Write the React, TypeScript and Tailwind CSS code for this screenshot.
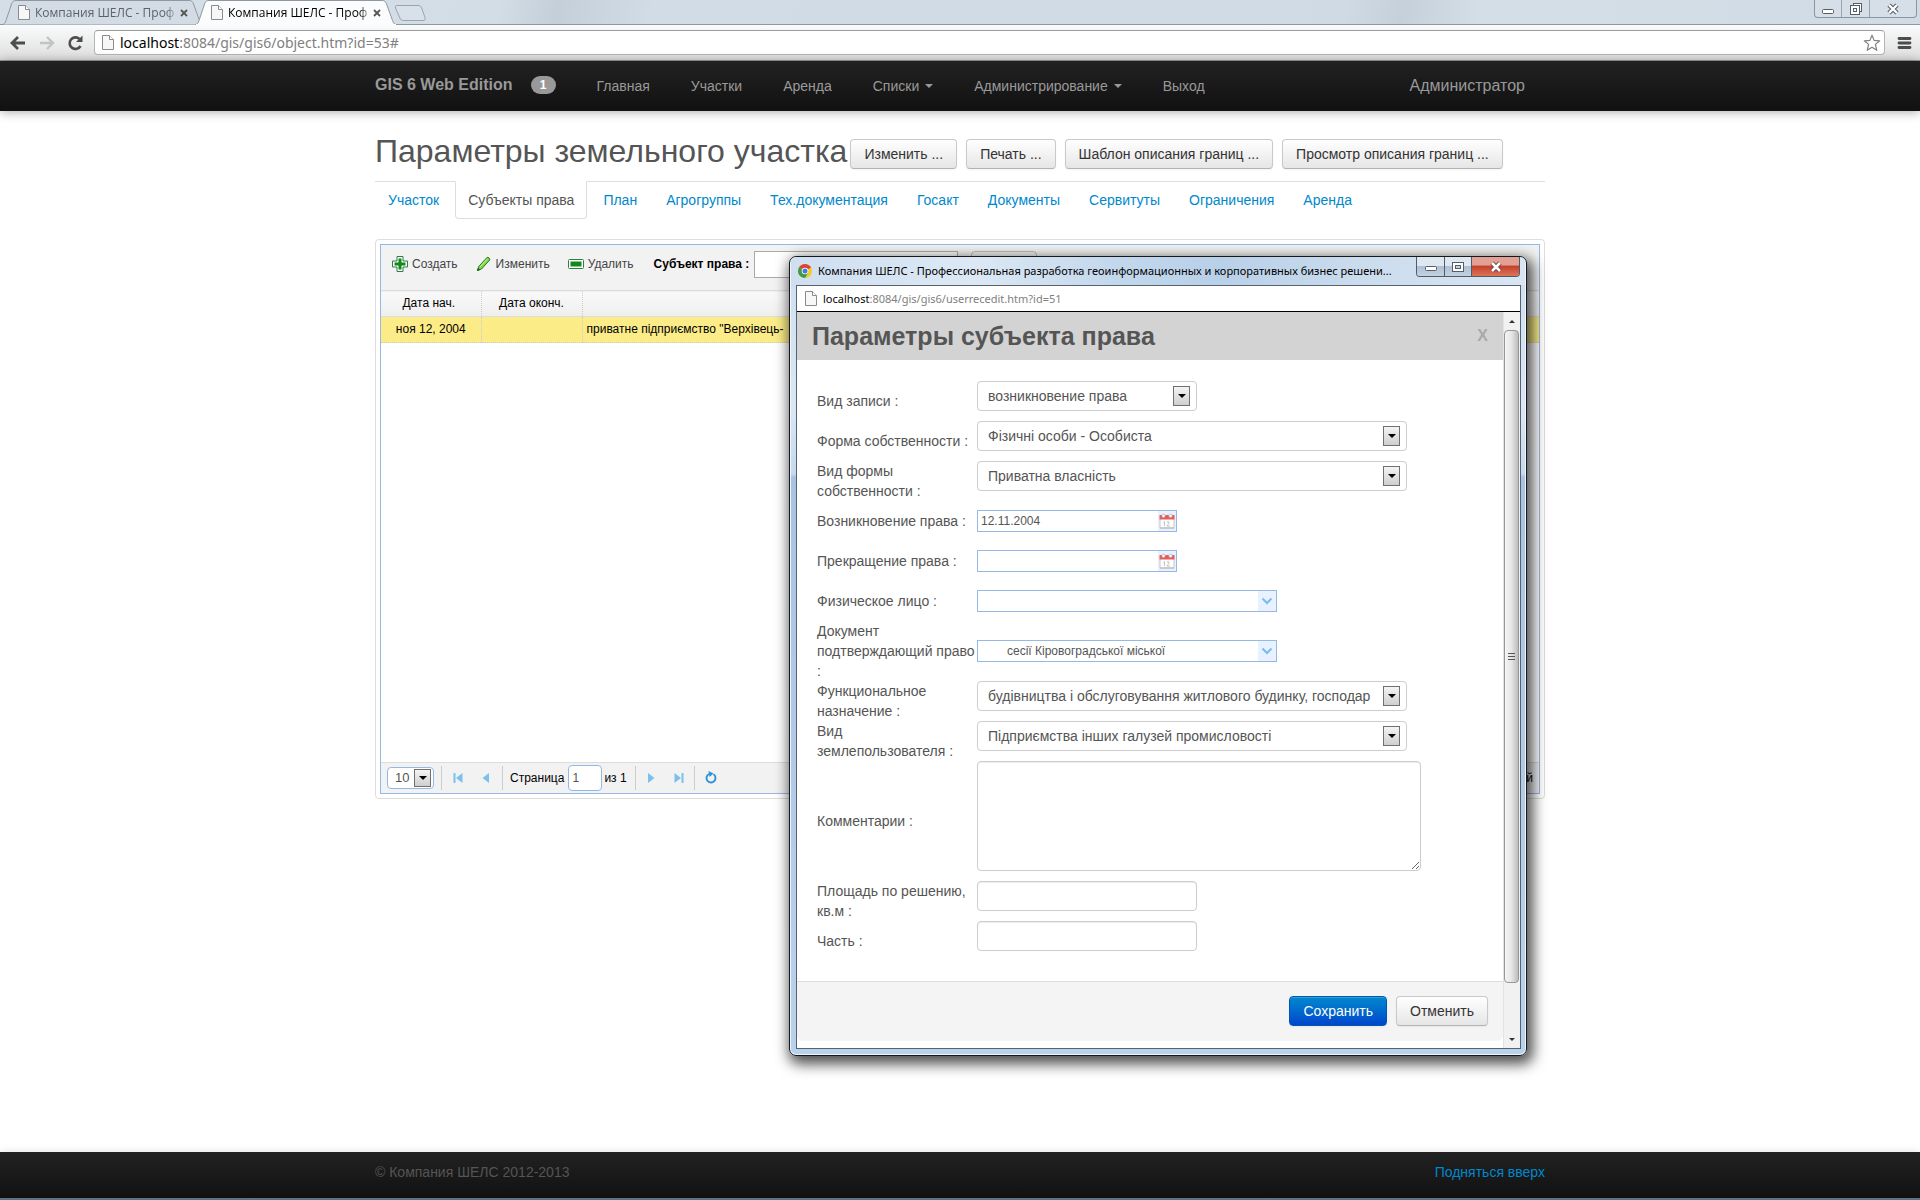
import { useState } from 'react'
import type { ReactNode } from 'react'

const NAV = [
  { label: 'Главная' },
  { label: 'Участки' },
  { label: 'Аренда' },
  { label: 'Списки', caret: true },
  { label: 'Администрирование', caret: true },
  { label: 'Выход' },
]

const ACTIONS = ['Изменить ...', 'Печать ...', 'Шаблон описания границ ...', 'Просмотр описания границ ...']

const TABS = [
  'Участок', 'Субъекты права', 'План', 'Агрогруппы', 'Тех.документация',
  'Госакт', 'Документы', 'Сервитуты', 'Ограничения', 'Аренда',
]

type Field = {
  id: string
  label: string
  kind: 'select' | 'date' | 'combo' | 'textarea' | 'text'
  value?: string
  short?: boolean
}

const FIELDS: Field[] = [
  { id: 'record', label: 'Вид записи :', kind: 'select', value: 'возникновение права', short: true },
  { id: 'ownform', label: 'Форма собственности :', kind: 'select', value: 'Фізичні особи - Особиста' },
  { id: 'ownkind', label: 'Вид формы\nсобственности :', kind: 'select', value: 'Приватна власність' },
  { id: 'start', label: 'Возникновение права :', kind: 'date', value: '12.11.2004' },
  { id: 'end', label: 'Прекращение права :', kind: 'date', value: '' },
  { id: 'person', label: 'Физическое лицо :', kind: 'combo', value: '' },
  { id: 'doc', label: 'Документ\nподтверждающий право\n:', kind: 'combo', value: 'сесії Кіровоградської міської' },
  { id: 'func', label: 'Функциональное\nназначение :', kind: 'select', value: 'будівництва і обслуговування житлового будинку, господар' },
  { id: 'landuser', label: 'Вид\nземлепользователя :', kind: 'select', value: 'Підприємства інших галузей промисловості' },
  { id: 'comment', label: 'Комментарии :', kind: 'textarea' },
  { id: 'area', label: 'Площадь по решению,\nкв.м :', kind: 'text' },
  { id: 'part', label: 'Часть :', kind: 'text' },
]

/* ── Icons ── */

function PageIcon() {
  return (
    <svg width="12" height="15" viewBox="0 0 12 15" className="shrink-0">
      <path d="M.5.5h7l4 4v10H.5z" fill="#f7f7f7" stroke="#8b8b8b" />
      <path d="M7.500.5v4h4" fill="#fff" stroke="#8b8b8b" />
    </svg>
  )
}

function ChromeIcon() {
  return (
    <svg width="14" height="14" viewBox="0 0 14 14" className="shrink-0">
      <circle cx="7" cy="7" r="7" fill="#f6c928" />
      <path d="M7 7 .95 3.500A7 7 0 0 1 13.060 3.500z" fill="#dc4437" />
      <path d="M7 7 .95 3.500A7 7 0 0 0 7 14l3-5z" fill="#3a9c4b" />
      <circle cx="7" cy="7" r="3.300" fill="#fff" />
      <circle cx="7" cy="7" r="2.500" fill="#3f7de0" />
    </svg>
  )
}

function CloseX() {
  return (
    <svg width="8" height="8" viewBox="0 0 8 8">
      <path d="m1 1 6 6M7 1 1 7" stroke="#555" strokeWidth="1.800" />
    </svg>
  )
}

function AddIcon() {
  return (
    <svg width="16" height="16" viewBox="0 0 16 16">
      <path d="M5 .5h6V5h4.500v6H11v4.500H5V11H.5V5H5z" fill="#fff" stroke="#2f7d45" strokeLinejoin="round" />
      <path d="M6.500 2.500h3v4h4v3h-4v4h-3v-4h-4v-3h4z" fill="#118a1b" />
    </svg>
  )
}

function PencilIcon() {
  return (
    <svg width="16" height="16" viewBox="0 0 16 16">
      <path d="m1.500 14.500 1.200-4L11 1.500c1-.9 3.500 1.200 2.700 2.500L5.500 13z" fill="#7ed63f" stroke="#2d7a2d" strokeLinejoin="round" />
      <path d="m1 15 1-3.200L4 14z" fill="#1f4f1f" />
      <path d="m4 11 7.500-8" stroke="#c9f5a4" />
    </svg>
  )
}

function RemoveIcon() {
  return (
    <svg width="16" height="16" viewBox="0 0 16 16">
      <rect x=".5" y="3.500" width="15" height="9" rx="1" fill="#fff" stroke="#2f7d45" />
      <path d="M2.500 5.500h11v5h-11z" fill="#118a1b" />
    </svg>
  )
}

function CalendarIcon() {
  return (
    <svg width="16" height="16" viewBox="0 0 16 16">
      <path d="M1 5h14v10H1z" fill="#fdfdfd" stroke="#c9c9c9" />
      <path d="M.5 2h15v4.500H.5z" fill="#ea5a5a" />
      <path d="M1 15h14" stroke="#b5b5b5" />
      <circle cx="4.500" cy="2.800" r="1.700" fill="#fff" stroke="#b9aeb0" strokeWidth=".8" />
      <circle cx="11.500" cy="2.800" r="1.700" fill="#fff" stroke="#b9aeb0" strokeWidth=".8" />
      <path d="m4.500 9.500 1-1v4.500M8 9q2.500-1.200 2 1L8 13h3" fill="none" stroke="#bdbdbd" strokeWidth=".9" />
    </svg>
  )
}

function PagerIcon({ d }: { d: string }) {
  return (
    <svg width="16" height="16" viewBox="0 0 16 16">
      <path d={d} fill="#7cc0ee" />
    </svg>
  )
}

function Caret() {
  return <span className="ml-1.5 border-x-4 border-t-4 border-x-transparent border-t-[#999]" />
}

/* Windows style drop-down arrow shown over native selects */
function SelectArrow({ small }: { small?: boolean }) {
  return (
    <span
      className={`pointer-events-none absolute flex items-center justify-center border border-[#707070]
                  bg-linear-to-b from-[#f4f4f4] to-[#cfcfcf] ${
                    small ? 'right-[3px] top-[2px] h-[18px] w-[17px]' : 'right-[7px] top-[5px] h-[20px] w-[17px]'
                  }`}
    >
      <span className="border-x-4 border-t-4 border-x-transparent border-t-black" />
    </span>
  )
}

/* ── Browser ── */

function BrowserTab({ active }: { active?: boolean }) {
  return (
    <div className={`relative flex h-[25px] w-[202px] items-center pl-4 pr-4 ${active ? '-ml-[9px]' : ''}`}>
      <svg width="202" height="25" viewBox="0 0 202 25" className="absolute left-0 top-0">
        <path
          d="M0 24.500c2 0 3-1 4-4L9.500 4C10.500 1.500 11.500.5 14 .5h173c2.500 0 3.500 1 4.500 3.500l6 16.500c1 3 2 4 4 4"
          fill={active ? '#fbfcfd' : '#d3dce5'}
          stroke="#8f979f"
        />
        {active && <path d="M1 24.500h200" stroke="#fbfcfd" />}
      </svg>
      <div className="relative flex flex-1 items-center">
        <PageIcon />
        <span
          className={`ml-[5px] w-[145px] whitespace-nowrap text-[12px] leading-4
                      [mask-image:linear-gradient(to_right,black_90%,transparent)] ${
                        active ? 'text-black' : 'text-[#5c6168]'
                      }`}
        >
          Компания ШЕЛС - Проф
        </span>
        <button aria-label="Закрыть вкладку"><CloseX /></button>
      </div>
    </div>
  )
}

function BrowserBar() {
  return (
    <div className="font-['Open_Sans','Noto_Sans',sans-serif]">
      <div className="flex h-[25px] border-b border-[#8f979f] bg-[linear-gradient(100deg,#d5dee7_0%,#d3dde6_26%,#c5cfd9_29%,#d2dce6_34%,#cfdae4_70%,#c6d0da_73%,#d4dee7_77%,#d0dbe5_100%)]">
        <div className="flex pl-0.5">
          <BrowserTab />
          <BrowserTab active />
        </div>
        <svg width="34" height="25" viewBox="0 0 34 25" className="-ml-[3px]">
          <path d="M3 5.500h21c2 0 3 .8 3.600 2.500l3.400 9.500c.6 2-.2 3-2 3H9.500c-2 0-3-.8-3.600-2.500L1.500 8C1 6.500 1.500 5.500 3 5.500z" fill="#d8e1e9" stroke="#9ba4ad" />
        </svg>
        <div className="ml-auto mr-[3px] flex h-[18px] rounded-b border border-t-0 border-[#8b95a1] bg-[#d6dfe8]">
          <button aria-label="Свернуть" className="flex w-[27px] items-center justify-center border-r border-[#9aa4af]">
            <svg width="14" height="14" viewBox="0 0 14 14"><rect x="1.500" y="7.500" width="11" height="4" rx="1" fill="#fff" stroke="#555d68" /></svg>
          </button>
          <button aria-label="Развернуть" className="flex w-[28px] items-center justify-center border-r border-[#9aa4af]">
            <svg width="14" height="14" viewBox="0 0 14 14">
              <rect x="4.500" y="1.500" width="8" height="8" fill="#fff" stroke="#555d68" />
              <rect x="1.500" y="3.500" width="9" height="9" fill="#fff" stroke="#555d68" />
              <rect x="4.500" y="6.500" width="3" height="3" fill="#fff" stroke="#555d68" />
            </svg>
          </button>
          <button aria-label="Закрыть" className="flex w-[46px] items-center justify-center">
            <svg width="14" height="12" viewBox="0 0 14 12">
              <path d="m3 2 8 8M11 2l-8 8" stroke="#555d68" strokeWidth="4.500" />
              <path d="m3 2 8 8M11 2l-8 8" stroke="#fff" strokeWidth="2.400" />
            </svg>
          </button>
        </div>
      </div>

      <div className="flex h-9 items-center border-b border-[#9a9a9a] bg-linear-to-b from-[#fafbfc] to-[#dedede] pl-[9px] pr-2">
        <button aria-label="Назад">
          <svg width="18" height="16" viewBox="0 0 18 16"><path d="M16 8H3M9 2 3 8l6 6" fill="none" stroke="#4d4d4d" strokeWidth="2.800" /></svg>
        </button>
        <button aria-label="Вперёд" className="ml-[11px]">
          <svg width="18" height="16" viewBox="0 0 18 16"><path d="M2 8h13M9 2l6 6-6 6" fill="none" stroke="#c3c3c3" strokeWidth="2.400" /></svg>
        </button>
        <button aria-label="Обновить" className="ml-[11px]">
          <svg width="18" height="16" viewBox="0 0 18 16">
            <path d="M13.500 11A5.800 5.800 0 1 1 12.500 4" fill="none" stroke="#4d4d4d" strokeWidth="2.600" />
            <path d="M15.500.5v6.500H9z" fill="#4d4d4d" />
          </svg>
        </button>
        <div className="ml-[9px] flex h-[25px] flex-1 items-center rounded-sm border border-[#b4b4b4] border-t-[#9c9c9c] bg-white pl-[7px] pr-[3px]">
          <PageIcon />
          <span className="ml-[6px] flex-1 font-['Noto_Sans',sans-serif] text-[14px] leading-5 text-[#808080]">
            <span className="text-black">localhost</span>:8084/gis/gis6/object.htm?id=53#
          </span>
          <svg width="18" height="18" viewBox="0 0 18 18">
            <path d="m9 1.200 2.100 5.200 5.600.4-4.300 3.600 1.400 5.900L9 13.300l-4.800 3 1.400-5.900L1.300 6.800l5.600-.4z" fill="#fff" stroke="#808080" strokeWidth="1.200" strokeLinejoin="round" />
          </svg>
        </div>
        <button aria-label="Меню" className="ml-3">
          <svg width="15" height="14" viewBox="0 0 15 14"><path d="M2 2.500h11M2 7h11M2 11.500h11" stroke="#4d4d4d" strokeWidth="2.800" strokeLinecap="round" /></svg>
        </button>
      </div>
    </div>
  )
}

/* ── Main page ── */

function Btn({ children, primary }: { children: ReactNode; primary?: boolean }) {
  return (
    <button
      className={`h-[30px] rounded border px-[13px] text-[14px] leading-5 shadow-[inset_0_1px_0_rgba(255,255,255,0.2),0_1px_2px_rgba(0,0,0,0.05)] ${
        primary
          ? 'border-[#0055b5] bg-linear-to-b from-[#0088cc] to-[#0044cc] text-white'
          : 'border-[#c9c9c9] border-b-[#b3b3b3] bg-linear-to-b from-white to-[#e6e6e6] text-[#333]'
      }`}
    >
      {children}
    </button>
  )
}

function Navbar() {
  return (
    <nav className="h-[50px] bg-linear-to-b from-[#222] to-[#111] text-[#999] shadow-[0_1px_10px_rgba(0,0,0,0.35)]">
      <div className="mx-auto flex h-full max-w-[1170px] items-center">
        <div className="flex items-center gap-[18px] pb-[2px]">
          <a href="#" className="text-[16px] font-bold leading-5">GIS 6 Web Edition</a>
          <span className="flex h-[18px] w-[25px] items-center justify-center rounded-full bg-[#999] text-[12px] font-bold text-white">1</span>
        </div>
        <ul className="ml-[21px] flex gap-px text-[14px] leading-5">
          {NAV.map(item => (
            <li key={item.label}>
              <a href="#" className="flex items-center px-5">
                {item.label}
                {item.caret && <Caret />}
              </a>
            </li>
          ))}
        </ul>
        <span className="ml-auto mr-5 text-[16px] leading-5">Администратор</span>
      </div>
    </nav>
  )
}

function ToolButton({ icon, children }: { icon: ReactNode; children: ReactNode }) {
  return (
    <button className="flex items-center gap-1 text-[12px] leading-4 text-[#444]">
      {icon}
      {children}
    </button>
  )
}

function Pager() {
  const sep = 'h-6 border-l border-[#ccc]'
  return (
    <div className="flex h-[31px] items-center border-t border-[#ddd] bg-[#f2f2f2] pl-[6px] pr-[6px] text-[12px] leading-4 text-black">
      <div className="relative h-[22px] w-[47px]">
        <select aria-label="Записей на странице" className="h-[22px] w-full appearance-none rounded border border-[#95b8e7] bg-white pl-[7px] text-[13px] text-[#555]">
          <option>10</option>
        </select>
        <SelectArrow small />
      </div>
      <span className={`ml-[7px] ${sep}`} />
      <button aria-label="Первая" className="ml-2"><PagerIcon d="M3.500 3h2v10h-2zM12.500 3v10L6 8z" /></button>
      <button aria-label="Предыдущая" className="ml-3"><PagerIcon d="M11 3v10L4.500 8z" /></button>
      <span className={`ml-2 ${sep}`} />
      <label htmlFor="page" className="ml-[7px]">Страница</label>
      <input id="page" defaultValue="1" className="ml-1 h-[26px] w-[34px] rounded border border-[#95b8e7] bg-white px-[3px] text-[12px] text-[#555]" />
      <span className="ml-0.5">из 1</span>
      <span className={`ml-2 ${sep}`} />
      <button aria-label="Следующая" className="ml-[7px]"><PagerIcon d="M5 3v10l6.500-5z" /></button>
      <button aria-label="Последняя" className="ml-3"><PagerIcon d="M3.500 3v10L10 8zM10.500 3h2v10h-2z" /></button>
      <span className={`ml-[7px] ${sep}`} />
      <button aria-label="Обновить таблицу" className="ml-2">
        <svg width="16" height="16" viewBox="0 0 16 16">
          <path d="M10.500 4.300A4.500 4.500 0 1 1 6 4" fill="none" stroke="#2e90d6" strokeWidth="1.900" />
          <path d="m5.500 1 5 2.500-4 3.500z" fill="#2e90d6" />
        </svg>
      </button>
      <span className="ml-auto">Просмотр 1 до 1 из 1 записей</span>
    </div>
  )
}

function Grid() {
  return (
    <div className="mt-5 rounded border border-[#ddd] p-1">
      <div className="border border-[#95b8e7]">
        <div className="flex h-[45px] items-start bg-[#f2f2f2] pl-[11px] pt-[6px]">
          <div className="flex h-[26px] items-center gap-[18px]">
            <ToolButton icon={<AddIcon />}>Создать</ToolButton>
            <ToolButton icon={<PencilIcon />}>Изменить</ToolButton>
            <ToolButton icon={<RemoveIcon />}>Удалить</ToolButton>
          </div>
          <label htmlFor="subject" className="ml-5 text-[12px] font-bold leading-[26px] text-black">Субъект права :</label>
          <input id="subject" className="ml-[5px] h-[27px] w-[204px] border border-[#aaa] bg-white px-1 text-[12px]" />
          <button aria-label="Поиск" className="ml-[13px] h-[27px] w-[66px] rounded border border-[#bbb] bg-[#f2f2f2]" />
        </div>
        <table className="w-full table-fixed border-collapse text-[12px] leading-4 text-black">
          <colgroup>
            <col className="w-[100px]" />
            <col className="w-[101px]" />
            <col />
          </colgroup>
          <thead>
            <tr className="h-[26px] border-y border-[#ddd] bg-linear-to-b from-[#f9f9f9] to-[#efefef]">
              <th className="border-r border-dotted border-r-[#ccc] pb-0.5 pr-1 font-normal">Дата нач.</th>
              <th className="border-r border-dotted border-r-[#ccc] pb-0.5 font-normal">Дата оконч.</th>
              <th aria-label="Субъект права" />
            </tr>
          </thead>
          <tbody>
            <tr className="h-[26px] border-b border-dotted border-[#ccc] bg-[#fbec88]">
              <td className="border-r border-dotted border-r-[#ccc] pb-0.5 text-center">ноя 12, 2004</td>
              <td className="border-r border-dotted border-r-[#ccc]" />
              <td className="pb-0.5 pl-1">приватне підприємство "Верхівець-</td>
            </tr>
          </tbody>
        </table>
        <div className="h-[419px] bg-white" />
        <Pager />
      </div>
    </div>
  )
}

/* ── Popup window ── */

function FieldControl({ field }: { field: Field }) {
  const [value, setValue] = useState(field.value ?? '')

  if (field.kind === 'select') {
    return (
      <div className={`relative mb-[10px] h-[30px] ${field.short ? 'w-[220px]' : 'w-[430px]'}`}>
        <select
          id={field.id}
          className="h-[30px] w-full appearance-none overflow-hidden rounded border border-[#ccc] bg-white pl-[10px] pr-[26px] text-[14px] leading-5 text-[#555]"
        >
          <option>{value}</option>
        </select>
        <SelectArrow />
      </div>
    )
  }
  if (field.kind === 'textarea') {
    return (
      <textarea
        id={field.id}
        className="mb-[10px] block h-[110px] w-[444px] rounded border border-[#ccc] bg-white px-[6px] py-1 text-[14px] shadow-[inset_0_1px_1px_rgba(0,0,0,0.075)]"
      />
    )
  }
  if (field.kind === 'text') {
    return (
      <input
        id={field.id}
        value={value}
        onChange={e => setValue(e.target.value)}
        className="mb-[10px] block h-[30px] w-[220px] rounded border border-[#ccc] bg-white px-[6px] text-[14px] shadow-[inset_0_1px_1px_rgba(0,0,0,0.075)]"
      />
    )
  }
  const date = field.kind === 'date'
  return (
    <div className={`flex h-[22px] border border-[#95b8e7] bg-white ${date ? 'w-[200px]' : 'w-[300px]'}`}>
      <input
        id={field.id}
        value={value}
        onChange={e => setValue(e.target.value)}
        className={`min-w-0 flex-1 text-[12px] leading-5 text-[#555] outline-none ${date ? 'pl-[3px]' : 'pl-[29px]'}`}
      />
      <button aria-label="Выбрать" className="flex w-[18px] items-center justify-center bg-[#e8f1ff]">
        {date ? (
          <CalendarIcon />
        ) : (
          <svg width="12" height="8" viewBox="0 0 12 8"><path d="m1.500 1.500 4.500 4.500 4.500-4.500" fill="none" stroke="#76bdee" strokeWidth="2" /></svg>
        )}
      </button>
    </div>
  )
}

function Scrollbar() {
  return (
    <div className="flex w-[17px] flex-col items-center border-l border-[#e3e3e3] bg-[#f1f1f1] pr-px">
      <div className="flex h-[18px] items-center"><span className="border-x-[3px] border-b-[3px] border-x-transparent border-b-[#333]" /></div>
      <div className="flex h-[653px] w-[15px] flex-col items-center justify-center gap-px rounded-sm border border-[#979797] bg-linear-to-r from-[#f5f5f5] via-[#e6e6e6] to-[#bcbcbc]">
        <span className="h-px w-[7px] bg-[#555]" />
        <span className="mt-px h-px w-[7px] bg-[#555]" />
        <span className="mt-px h-px w-[7px] bg-[#555]" />
      </div>
      <div className="mt-auto flex h-[18px] items-center"><span className="border-x-[3px] border-t-[3px] border-x-transparent border-t-[#333]" /></div>
    </div>
  )
}

function Popup() {
  return (
    <div
      role="dialog"
      aria-labelledby="popup-title"
      className="absolute left-[789px] top-[256px] w-[738px] rounded-[7px] border border-[#15191f]
                 bg-[linear-gradient(#cddff0_0px,#dbe7f3_150px,#c6d9ee_217px,#a9c4e2_220px,#b9d2ec_790px)]
                 pb-[6px] pl-[7px] pr-[6px] shadow-[inset_0_0_0_1px_#eef5fc,3px_5px_14px_3px_rgba(0,0,0,0.7)]"
    >
      <div className="-ml-[6px] -mr-[5px] flex h-[28px] items-start rounded-t-md bg-[linear-gradient(90deg,#cfdff0_0%,#dce8f4_25%,#c2d7ec_45%,#b8d0e8_58%,#cbdced_78%,#d9e5f2_100%)] pl-[7px] pr-[5px] font-['Noto_Sans',sans-serif]">
        <div className="flex h-[28px] min-w-0 flex-1 items-center gap-[6px]">
          <ChromeIcon />
          <span className="whitespace-nowrap text-[11px] leading-4 text-black">
            Компания ШЕЛС - Профессиональная разработка геоинформационных и корпоративных бизнес решени...
          </span>
        </div>
        <div className="ml-[2px] flex h-[20px] shrink-0 overflow-hidden rounded-b border border-t-0 border-[#4f5b6a]">
          <button aria-label="Свернуть" className="flex w-[28px] items-center justify-center border-r border-[#4f5b6a] bg-linear-to-b from-[#dfe8f1] from-45% via-[#b0c0d2] via-50% to-[#c3d2e1]">
            <svg width="14" height="12" viewBox="0 0 14 12"><rect x="1.500" y="5.500" width="11" height="4" rx="1" fill="#fff" stroke="#555d68" /></svg>
          </button>
          <button aria-label="Развернуть" className="flex w-[27px] items-center justify-center border-r border-[#4f5b6a] bg-linear-to-b from-[#dfe8f1] from-45% via-[#b0c0d2] via-50% to-[#c3d2e1]">
            <svg width="14" height="12" viewBox="0 0 14 12">
              <rect x="1.500" y="1.500" width="11" height="9" fill="#fff" stroke="#555d68" />
              <rect x="4.500" y="4.500" width="5" height="3" fill="#c3d2e1" stroke="#555d68" />
            </svg>
          </button>
          <button aria-label="Закрыть" className="flex w-[47px] items-center justify-center bg-linear-to-b from-[#e3a095] from-40% via-[#c4412c] via-50% to-[#dc7458]">
            <svg width="14" height="12" viewBox="0 0 14 12">
              <path d="m3 2 8 8M11 2l-8 8" stroke="#6b3a38" strokeWidth="4.500" />
              <path d="m3 2 8 8M11 2l-8 8" stroke="#fff" strokeWidth="2.600" />
            </svg>
          </button>
        </div>
      </div>

      <div className="-mx-px border border-[#566270] bg-white">
        <div className="flex h-[26px] items-center gap-[6px] border-b border-black pl-2 font-['Noto_Sans',sans-serif]">
          <PageIcon />
          <span className="text-[11px] leading-4 text-[#808080]"><span className="text-black">localhost</span>:8084/gis/gis6/userrecedit.htm?id=51</span>
        </div>
        <div className="flex">
          <div className="min-w-0 flex-1 pb-[7px]">
            <div className="flex h-[48px] items-center justify-between bg-[#d3d3d3] pl-[15px] pr-[15px]">
              <h3 id="popup-title" className="text-[25px] font-bold leading-10 text-[#555]">Параметры субъекта права</h3>
              <button aria-label="Закрыть форму" className="text-[16px] font-bold leading-5 text-[#a9a9a9]">X</button>
            </div>

            <form onSubmit={e => e.preventDefault()}>
              <div className="px-5 pb-5 pt-[21px] text-[14px] leading-5 text-[#555]">
                {FIELDS.map(field => (
                  <div key={field.id} className="flex min-h-10 items-center">
                    <label htmlFor={field.id} className="w-[160px] shrink-0 whitespace-pre">{field.label}</label>
                    <FieldControl field={field} />
                  </div>
                ))}
              </div>
              <div className="flex justify-end gap-[9px] rounded-b-md border-t border-[#ddd] bg-[#f4f4f4] px-[15px] pb-[15px] pt-[14px]">
                <Btn primary>Сохранить</Btn>
                <Btn>Отменить</Btn>
              </div>
            </form>
          </div>
          <Scrollbar />
        </div>
      </div>
    </div>
  )
}

export default function App() {
  const [tab, setTab] = useState('Субъекты права')

  return (
    <div className="relative flex min-h-screen flex-col bg-white font-['Liberation_Sans',Arial,sans-serif] text-[14px] leading-5 text-[#555]">
      <BrowserBar />
      <Navbar />

      <main className="mx-auto w-full max-w-[1170px] flex-1 pt-5">
        <div className="flex h-[50px] items-start gap-[3px]">
          <h2 className="text-[32px] leading-10">Параметры земельного участка</h2>
          <div className="flex gap-[9px] pt-2">
            {ACTIONS.map(a => <Btn key={a}>{a}</Btn>)}
          </div>
        </div>

        <ul className="flex border-t border-[#ddd]">
          {TABS.map(t => (
            <li key={t} className="-mt-px mr-[3px]">
              <a
                href="#"
                onClick={() => setTab(t)}
                className={`block rounded-b border px-3 py-2 ${
                  t === tab
                    ? 'border-[#ddd] border-t-white bg-white text-[#555]'
                    : 'border-transparent text-[#0088cc]'
                }`}
              >
                {t}
              </a>
            </li>
          ))}
        </ul>

        <Grid />
      </main>

      <footer className="h-[46px] bg-linear-to-b from-[#222] to-[#111] shadow-[0_-1px_8px_rgba(0,0,0,0.1)]">
        <div className="mx-auto flex max-w-[1170px] justify-between pt-[10px]">
          <span>© Компания ШЕЛС 2012-2013</span>
          <a href="#" className="text-[#0088cc]">Подняться вверх</a>
        </div>
      </footer>
      <div className="h-0.5 bg-[#5d7384]" />

      <Popup />
    </div>
  )
}
